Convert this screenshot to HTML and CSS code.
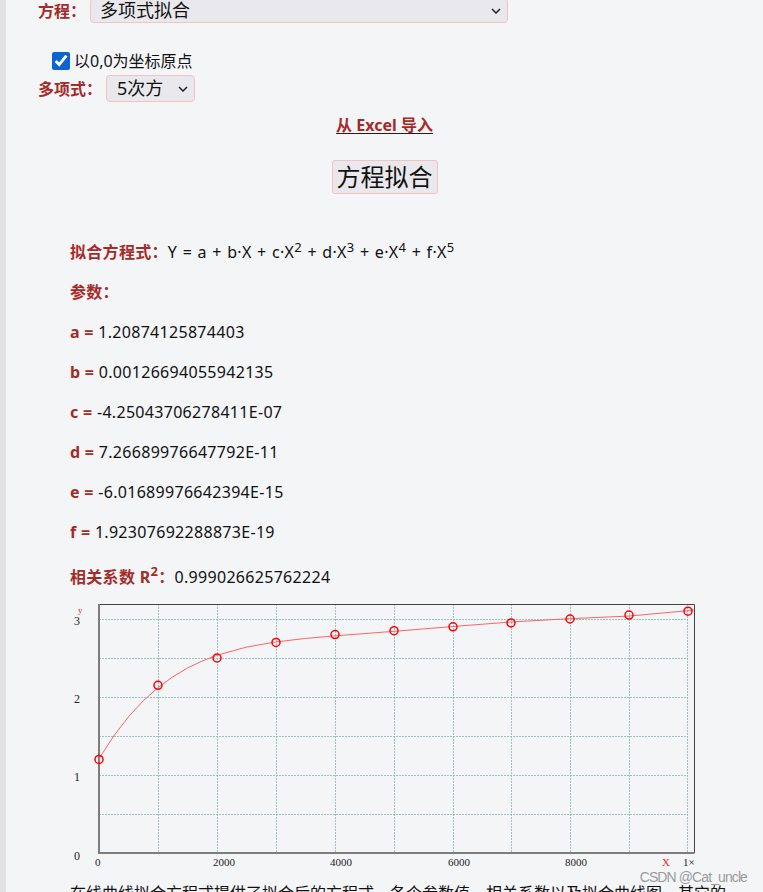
FILE: index.html
```html
<!DOCTYPE html>
<html lang="zh-CN">
<head>
<meta charset="utf-8">
<title>在线曲线拟合</title>
<link rel="stylesheet" href="styles.css">
</head>
<body>
<div class="page">
  <div class="form-row row-method">
    <label class="lbl">方程：</label>
    <span class="sel-wrap sel-method">
      <select class="sel"><option>多项式拟合</option></select>
      <svg class="chev" width="10" height="6" viewBox="0 0 10 6"><path d="M1 1 L5 5 L9 1" fill="none" stroke="#222" stroke-width="1.5"/></svg>
    </span>
  </div>
  <div class="check-row">
    <input type="checkbox" id="origin" class="chk" checked>
    <label for="origin" class="chk-lbl">以0,0为坐标原点</label>
  </div>
  <div class="form-row row-degree">
    <label class="lbl">多项式：</label>
    <span class="sel-wrap sel-degree">
      <select class="sel"><option>5次方</option></select>
      <svg class="chev" width="10" height="6" viewBox="0 0 10 6"><path d="M1 1 L5 5 L9 1" fill="none" stroke="#222" stroke-width="1.5"/></svg>
    </span>
  </div>
  <div class="center link-row"><a class="excel" href="#">从 Excel 导入</a></div>
  <div class="center btn-row"><button class="fit-btn">方程拟合</button></div>

  <div class="result">
    <p><b class="k">拟合方程式：</b><span class="formula">Y = a + b·X + c·X<sup>2</sup> + d·X<sup>3</sup> + e·X<sup>4</sup> + f·X<sup>5</sup></span></p>
    <p><b class="k">参数：</b></p>
    <p><b class="k">a = </b>1.20874125874403</p>
    <p><b class="k">b = </b>0.00126694055942135</p>
    <p><b class="k">c = </b>-4.25043706278411E-07</p>
    <p><b class="k">d = </b>7.26689976647792E-11</p>
    <p><b class="k">e = </b>-6.01689976642394E-15</p>
    <p><b class="k">f = </b>1.92307692288873E-19</p>
    <p class="r2"><b class="k">相关系数 R<sup>2</sup>：</b>0.999026625762224</p>

    <svg class="chart" width="640" height="276" viewBox="64 598 640 276">
      <g class="grid">
        <line x1="158.5" y1="604" x2="158.5" y2="853"/>
        <line x1="217.5" y1="604" x2="217.5" y2="853"/>
        <line x1="276.5" y1="604" x2="276.5" y2="853"/>
        <line x1="335.5" y1="604" x2="335.5" y2="853"/>
        <line x1="394.5" y1="604" x2="394.5" y2="853"/>
        <line x1="453.5" y1="604" x2="453.5" y2="853"/>
        <line x1="511.5" y1="604" x2="511.5" y2="853"/>
        <line x1="570.5" y1="604" x2="570.5" y2="853"/>
        <line x1="629.5" y1="604" x2="629.5" y2="853"/>
        <line x1="687.5" y1="604" x2="687.5" y2="853"/>
        <line x1="99" y1="619.5" x2="688" y2="619.5"/>
        <line x1="99" y1="658.5" x2="688" y2="658.5"/>
        <line x1="99" y1="697.5" x2="688" y2="697.5"/>
        <line x1="99" y1="736.5" x2="688" y2="736.5"/>
        <line x1="99" y1="775.5" x2="688" y2="775.5"/>
        <line x1="99" y1="814.5" x2="688" y2="814.5"/>
      </g>
      <path class="frame" d="M99 604.5 H694.5 V853"/>
      <path class="axis" d="M99 604 V853 H694.5"/>
      <polyline class="curve" points="99,758.7 113.7,736 128.4,716.9 143.1,701 157.8,687.8 172.5,677 187.2,668.2 201.9,661.1 216.6,655.4 246,647.2 275.4,642 304.8,638.5 334.2,635.9 393,631.4 451.8,626.6 510.6,622 569.4,618.7 628.2,616.1 687,610.8 694,609.8"/>
      <g class="pts">
        <circle cx="99" cy="759.4" r="4"/>
        <circle cx="158" cy="685.3" r="4"/>
        <circle cx="217" cy="658" r="4"/>
        <circle cx="276" cy="642.4" r="4"/>
        <circle cx="335" cy="634.6" r="4"/>
        <circle cx="394" cy="630.7" r="4"/>
        <circle cx="453" cy="626.8" r="4"/>
        <circle cx="511" cy="622.9" r="4"/>
        <circle cx="570" cy="619" r="4"/>
        <circle cx="629" cy="615.1" r="4"/>
        <circle cx="688" cy="611.2" r="4"/>
      </g>
      <g class="ylab">
        <text x="77" y="625">3</text>
        <text x="77" y="703">2</text>
        <text x="77" y="781">1</text>
        <text x="77" y="860">0</text>
      </g>
      <g class="xlab">
        <text x="95" y="866">0</text>
        <text x="213" y="866">2000</text>
        <text x="330" y="866">4000</text>
        <text x="448" y="866">6000</text>
        <text x="565" y="866">8000</text>
        <text x="683" y="866">1×</text>
      </g>
      <text class="axname yname" x="78" y="613">y</text>
      <text class="axname" x="662" y="866">X</text>
    </svg>

    <p class="desc">在线曲线拟合方程式提供了拟合后的方程式，各个参数值，相关系数以及拟合曲线图，其它的</p>
  </div>
  <div class="watermark">CSDN @Cat_uncle</div>
</div>
</body>
</html>
```
FILE: styles.css
```css
html, body {
  margin: 0;
  padding: 0;
  height: 892px;
  overflow: hidden;
  background: #f4f5f7;
}
body {
  font-family: "Noto Sans", "Noto Sans CJK SC", sans-serif;
  font-size: 16px;
  color: #111;
}
.page {
  position: relative;
  height: 892px;
  border-left: 6px solid #e1e1e4;
  padding-left: 32px;
  overflow: hidden;
}
.form-row {
  display: flex;
  align-items: center;
  gap: 4px;
}
.row-method {
  margin-top: -2px;
  height: 25px;
}
.lbl {
  font-weight: bold;
  color: #a52a2a;
  font-size: 16px;
  line-height: 20px;
}
.sel-wrap {
  position: relative;
  display: inline-block;
}
.sel {
  appearance: none;
  -webkit-appearance: none;
  display: block;
  font-family: "Noto Sans", "Noto Sans CJK SC", sans-serif;
  font-size: 18px;
  color: #111;
  background: #e9e9ed;
  border: 1px solid #f4c2c2;
  border-radius: 4px;
  margin: 0;
  outline: none;
}
.sel-method .sel {
  width: 418px;
  height: 25px;
  line-height: 23px;
  padding: 0 0 0 9px;
}
.sel-degree .sel {
  width: 89px;
  height: 27px;
  line-height: 25px;
  padding: 0 0 0 10px;
}
.chev {
  position: absolute;
  top: 50%;
  margin-top: -3px;
  right: 7px;
  pointer-events: none;
}
.check-row {
  margin-top: 28px;
  height: 20px;
  display: flex;
  align-items: center;
  padding-left: 14px;
}
.chk {
  width: 18px;
  height: 18px;
  margin: 0 4px 0 0;
  accent-color: #0b63d6;
}
.chk-lbl {
  font-size: 16px;
  line-height: 20px;
  color: #111;
}
.row-degree {
  margin-top: 4px;
  height: 27px;
}
.center {
  text-align: center;
  margin-left: -32px;
}
.link-row {
  margin-top: 11px;
  line-height: 24px;
}
.excel {
  color: #a52a2a;
  font-weight: bold;
  font-size: 16px;
  text-decoration: underline;
  text-decoration-color: #3a1212;
  text-underline-offset: 2px;
}
.btn-row {
  margin-top: 23px;
  height: 34px;
}
.fit-btn {
  font-family: "Noto Sans", "Noto Sans CJK SC", sans-serif;
  font-size: 24px;
  line-height: 30px;
  height: 34px;
  padding: 0 4px;
  color: #111;
  background: #e9e9ed;
  border: 1px solid #f4c2c2;
  border-radius: 3px;
}
.result {
  padding-top: 30px;
  margin-left: 32px;
}
.result p {
  margin: 16px 0;
  line-height: 24px;
  font-size: 16px;
  letter-spacing: 0.3px;
  white-space: nowrap;
}
.k {
  color: #a52a2a;
  font-weight: bold;
}
.formula {
  word-spacing: 1px;
}
sup {
  font-size: 13px;
  line-height: 0;
  vertical-align: 6px;
}
.result p.r2 {
  margin-top: 21px;
  margin-bottom: 9px;
}
.r2 sup {
  font-size: 13px;
  vertical-align: 7px;
}
.chart {
  display: block;
  margin-left: -6px;
}
.grid line {
  stroke: #78b0b2;
  stroke-width: 1;
  stroke-dasharray: 2 1;
  opacity: 0.7;
}
.frame {
  fill: none;
  stroke: #444;
  stroke-width: 1;
}
.axis {
  fill: none;
  stroke: #7d7d7d;
  stroke-width: 2;
}
.curve {
  fill: none;
  stroke: #ff6464;
  stroke-width: 1;
}
.pts circle {
  fill: none;
  stroke: #ff0000;
  stroke-width: 1.5;
}
.ylab text {
  font-family: "Liberation Serif", serif;
  font-size: 12px;
  fill: #222;
  text-anchor: middle;
}
.xlab text {
  font-family: "Liberation Serif", serif;
  font-size: 11px;
  fill: #222;
}
.axname {
  font-family: "Liberation Serif", serif;
  font-size: 11px;
  fill: #ff2020;
}
.yname {
  font-size: 9px;
}
.result p.desc {
  margin-top: 7px;
  letter-spacing: 0;
  color: #111;
}
.watermark {
  position: absolute;
  right: 16px;
  top: 869px;
  font-family: "Liberation Sans", Arial, sans-serif;
  font-size: 14px;
  letter-spacing: -0.9px;
  line-height: 16px;
  color: rgba(110, 110, 110, 0.7);
  pointer-events: none;
}
```
